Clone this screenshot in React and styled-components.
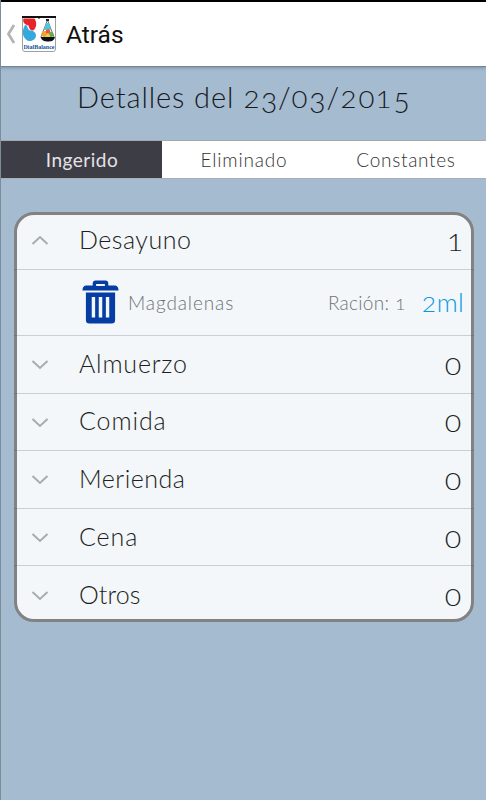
import React, { useState } from 'react'
import styled, { createGlobalStyle } from 'styled-components'

const GlobalStyle = createGlobalStyle`
  * {
    box-sizing: border-box;
  }
  body {
    margin: 0;
    background-color: #a5bbd0;
    font-family: Lato, "Open Sans", sans-serif;
    font-weight: 300;
  }
`

const Screen = styled.div`
  display: flex;
  flex-direction: column;
  width: 486px;
  height: 800px;
  border-left: 1px solid #7f8c99;
  background-color: #a5bbd0;
  overflow: hidden;
`

const Header = styled.header`
  display: flex;
  align-items: center;
  height: 67px;
  margin-left: -1px;
  padding: 1px 0 0 5px;
  flex-shrink: 0;
  background-color: white;
  border-top: 2px solid #000;
  border-left: 1px solid #999;
  border-bottom: 1px solid #748493;
  box-shadow: 0 1px 3px rgba(60, 80, 100, 0.4);
`

const BackArrow = styled.svg`
  width: 10px;
  height: 20px;
  margin: 0 6px 2px 0;
`

const Logo = styled.svg`
  width: 34px;
  height: 36px;
  margin-bottom: 1px;
  overflow: visible;
`

const HeaderTitle = styled.span`
  margin-left: 10px;
  font-family: Roboto, sans-serif;
  font-weight: 400;
  font-size: 24.5px;
  line-height: 28px;
  color: #111;
`

const Title = styled.h1`
  height: 73px;
  margin: 0;
  padding-left: 76px;
  flex-shrink: 0;
  font-size: 29px;
  font-weight: 300;
  line-height: 59px;
  letter-spacing: 0.9px;
  white-space: nowrap;
  color: #17191c;
`

const Tabs = styled.nav`
  display: flex;
  height: 39px;
  margin-left: -1px;
  flex-shrink: 0;
  border-top: 1px solid #a6a8ae;
  border-bottom: 1px solid #a9afb6;
  background-color: white;
`

const Tab = styled.button`
  flex: 1 0 0;
  padding: 0 0 1px 2px;
  border: 0;
  font-family: inherit;
  font-size: 19px;
  font-weight: ${({ $active }) => ($active ? 400 : 300)};
  letter-spacing: ${({ $spacing }) => $spacing}px;
  color: ${({ $active }) => ($active ? '#e4e4e8' : '#333')};
  background-color: ${({ $active }) => ($active ? '#3d3d46' : 'white')};
`

const Card = styled.section`
  margin: 33px 12px 0 13px;
  flex-shrink: 0;
  height: 410px;
  border: 3px solid #828282;
  border-radius: 20px;
  background-color: #f3f7fa;
`

const Row = styled.div`
  display: flex;
  align-items: center;
  height: ${({ $height }) => $height || 57.6}px;
  margin: 0 -3px;
  padding: 0 12px ${({ $lift }) => $lift || 3}px 17px;
  border-bottom: ${({ $last }) => ($last ? '0' : '1px solid rgba(60, 70, 80, 0.22)')};
`

const Chevron = styled.svg`
  width: 18px;
  height: 12px;
  margin-top: ${({ $open }) => ($open ? 1 : 5)}px;
  transform: ${({ $open }) => ($open ? 'rotate(180deg)' : 'none')};
`

const Meal = styled.span`
  flex: 1;
  margin-left: 30px;
  font-size: 25px;
  letter-spacing: ${({ $spacing }) => $spacing}px;
  color: #1c1e21;
`

const Count = styled.span`
  margin-right: ${({ $narrow }) => ($narrow ? -2 : 0)}px;
  font-size: 30px;
  color: #1c1e21;
`

const ItemRow = styled(Row)`
  padding: 0 10px 1px 68px;
`

const Trash = styled.svg`
  width: 37px;
  height: 44px;
`

const ItemName = styled.span`
  flex: 1;
  margin-left: 9px;
  font-size: 19px;
  letter-spacing: 0.9px;
  color: #6f7275;
`

const Portion = styled.span`
  font-size: 19px;
  letter-spacing: 0.3px;
  color: #6f7275;
`

const Amount = styled.span`
  margin-left: 15px;
  font-size: 26px;
  letter-spacing: 0.3px;
  color: #0799e0;
`

// old style digit: x-height size, 3 and 5 hang below the baseline
const Digit = styled.span`
  display: inline-block;
  line-height: 1;
  font-size: ${({ $low }) => ($low ? 0.96 : 0.79)}em;
  transform: ${({ $low }) => ($low ? 'translateY(0.17em)' : 'scaleX(1.2)')};
  margin: 0 ${({ $low }) => ($low ? 0 : 0.08)}em;
`

const Figures = ({ children }) =>
  String(children).split(/(\d)/).map((part, i) =>
    /\d/.test(part) ? <Digit key={i} $low={/[3-579]/.test(part)}>{part}</Digit> : part
  )

const tabs = [
  { label: 'Ingerido', spacing: 0.5 },
  { label: 'Eliminado', spacing: 0.8 },
  { label: 'Constantes', spacing: 0.7 },
]

const meals = [
  { name: 'Desayuno', count: 1, spacing: 0.5, items: [{ name: 'Magdalenas', portion: 1, amount: '2ml' }] },
  { name: 'Almuerzo', count: 0, spacing: 0.8, items: [] },
  { name: 'Comida', count: 0, spacing: 0.9, items: [] },
  { name: 'Merienda', count: 0, spacing: 0.5, items: [] },
  { name: 'Cena', count: 0, spacing: 0.9, items: [] },
  { name: 'Otros', count: 0, spacing: 0.1, items: [] },
]

const DialBalanceLogo = () => (
  <Logo viewBox="0 0 34 36">
    <path d="M0.500 1V33Q0.500 35.500 3 35.500H31Q33.500 35.500 33.500 33V1Z" fill="#fff" stroke="#888" strokeWidth="0.8" />
    <path d="M0 0h34v2H18l-1 1-1-1H0z" fill="#111" />
    <path d="M1.500 2.500C0 7 4 9 6.500 9.500C7 13 9 15 11 14.500C15 12 15 6 12.500 2.500Z" fill="#e5252a" />
    <path d="M3 9C0 14 0 20 4 23.500C8 27 14 24 14 19.500C14 15.500 10 14.500 8 14.500C5 13.500 6 8 3 9Z" fill="#35a9dd" />
    <path d="M25.500 4L19 21M25.500 4L32 21" stroke="#333" strokeWidth="0.7" fill="none" />
    <rect x="24" y="3" width="3" height="2" fill="#222" />
    <path d="M24 7h3l2 7h-7z" fill="#55c3e0" />
    <circle cx="22.500" cy="18" r="3" fill="#f0a52b" />
    <circle cx="26" cy="15.500" r="2.300" fill="#e8573b" />
    <circle cx="29" cy="18.500" r="2.500" fill="#69a845" />
    <circle cx="26" cy="20" r="2" fill="#f3cd44" />
    <path d="M18.500 21H33C32 25 29 25.500 26 25.500S20 25 18.500 21z" fill="#101114" />
    <text x="1.500" y="32.800" fontFamily="Liberation Serif, serif" fontWeight="700" fontSize="7" textLength="31" lengthAdjust="spacingAndGlyphs" fill="#14539a">
      DialBalance
    </text>
  </Logo>
)

const TrashIcon = () => (
  <Trash viewBox="0 0 38 44" preserveAspectRatio="none" fill="#063da5">
    <path fillRule="evenodd" d="M11 5V3.500Q11 0.500 14 0.500H24Q27 0.500 27 3.500V5.500H34Q37.500 6 37.500 10.500H0.500Q0.500 6 4 5.500H11ZM14.500 6H23.500V4H14.500Z" />
    <path fillRule="evenodd" d="M4 12.500H34V40Q34 43.500 30.500 43.500H7.500Q4 43.500 4 40ZM10 17V37.500H13.500V17ZM17.200 17V37.500H20.800V17ZM24.500 17V37.500H28V17Z" />
  </Trash>
)

const App = () => {
  const [activeTab, setActiveTab] = useState('Ingerido')
  const [openMeal, setOpenMeal] = useState('Desayuno')

  return (
    <>
      <GlobalStyle />
      <Screen>
        <Header>
          <BackArrow viewBox="0 0 10 20">
            <path d="M8 1L2.500 10L8 19" fill="none" stroke="#b4b4b4" strokeWidth="2.8" />
          </BackArrow>
          <DialBalanceLogo />
          <HeaderTitle>Atrás</HeaderTitle>
        </Header>
        <Title><Figures>Detalles del 23/03/2015</Figures></Title>
        <Tabs>
          {tabs.map(({ label, spacing }) => (
            <Tab key={label} $active={label === activeTab} $spacing={spacing} onClick={() => setActiveTab(label)}>
              {label}
            </Tab>
          ))}
        </Tabs>
        <Card>
          {meals.map(({ name, count, spacing, items }, i) => (
            <React.Fragment key={name}>
              <Row
                $height={i === 0 ? 55 : undefined}
                $lift={i === 0 ? 6 : 3}
                $last={i === meals.length - 1}
                onClick={() => setOpenMeal(openMeal === name ? null : name)}
              >
                <Chevron viewBox="0 0 18 12" $open={openMeal === name}>
                  <path d="M1.500 2L9 9L16.500 2" fill="none" stroke="#a9acaf" strokeWidth="2" />
                </Chevron>
                <Meal $spacing={spacing}>{name}</Meal>
                <Count $narrow={count === 1}><Figures>{count}</Figures></Count>
              </Row>
              {openMeal === name && items.map((item) => (
                <ItemRow key={item.name} $height={66}>
                  <TrashIcon />
                  <ItemName>{item.name}</ItemName>
                  <Portion><Figures>{`Ración: ${item.portion}`}</Figures></Portion>
                  <Amount><Figures>{item.amount}</Figures></Amount>
                </ItemRow>
              ))}
            </React.Fragment>
          ))}
        </Card>
      </Screen>
    </>
  )
}

export default App
